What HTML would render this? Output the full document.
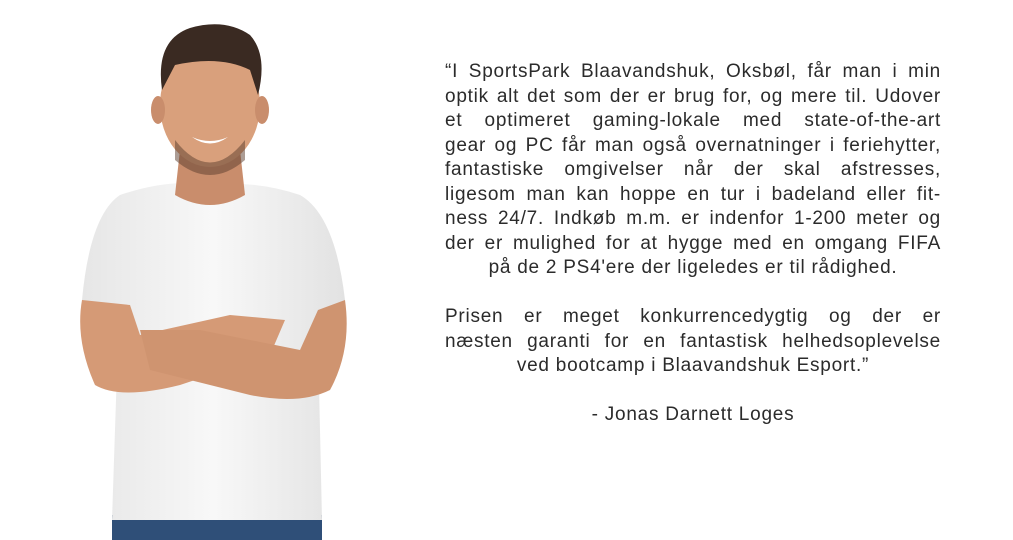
<!DOCTYPE html>
<html><head><meta charset="utf-8"><style>
html,body{margin:0;padding:0;background:#fff;width:1013px;height:540px;overflow:hidden;position:relative}
.t{position:absolute;left:445px;width:496px;font-family:"Liberation Sans",sans-serif;font-size:19px;letter-spacing:0.75px;color:#2b2b2b;line-height:24.5px}
.t div{text-align:justify;text-align-last:justify;white-space:nowrap}
.t div.c{text-align:center;text-align-last:center}
</style></head><body>
<svg width="420" height="540" style="position:absolute;left:0;top:0">
<defs>
<linearGradient id="sh" x1="0" x2="1"><stop offset="0" stop-color="#e6e6e6"/><stop offset=".5" stop-color="#f8f8f8"/><stop offset="1" stop-color="#e2e2e2"/></linearGradient>
</defs>
<rect x="112" y="515" width="210" height="30" fill="#2f4f78"/>
<path d="M120 195 Q170 178 210 185 Q255 180 300 195 Q335 215 345 300 L330 310 L318 340 L322 520 L112 520 L118 340 L82 300 Q90 215 120 195Z" fill="url(#sh)"/>
<path d="M180 150 L240 150 L245 195 Q210 215 175 195Z" fill="#c98d6c"/>
<ellipse cx="210" cy="105" rx="50" ry="62" fill="#d9a07c"/>
<ellipse cx="158" cy="110" rx="7" ry="14" fill="#c98d6c"/>
<ellipse cx="262" cy="110" rx="7" ry="14" fill="#c98d6c"/>
<path d="M162 90 Q155 40 190 28 Q225 18 250 35 Q268 55 258 95 L250 70 Q220 55 175 65 Z" fill="#3a2a22"/>
<path d="M175 140 Q210 185 245 140 L245 160 Q210 190 175 160Z" fill="#5a3b2c" opacity=".5"/>
<path d="M192 137 Q210 150 228 137 Q210 145 192 137Z" fill="#fff"/>
<path d="M82 300 Q75 340 95 385 Q120 400 180 385 L270 355 L285 320 L230 315 L140 335 L130 305Z" fill="#d59a76"/>
<path d="M345 300 Q352 350 330 390 Q300 405 250 395 L150 370 L140 330 L200 330 L300 350 L318 310Z" fill="#cf9470"/>
</svg>
<div class="t" style="top:60px">
<div>“I SportsPark Blaavandshuk, Oksbøl, får man i min</div>
<div>optik alt det som der er brug for, og mere til. Udover</div>
<div>et optimeret gaming-lokale med state-of-the-art</div>
<div>gear og PC får man også overnatninger i feriehytter,</div>
<div>fantastiske omgivelser når der skal afstresses,</div>
<div>ligesom man kan hoppe en tur i badeland eller fit-</div>
<div>ness 24/7. Indkøb m.m. er indenfor 1-200 meter og</div>
<div>der er mulighed for at hygge med en omgang FIFA</div>
<div class="c">på de 2 PS4'ere der ligeledes er til rådighed.</div>
<div>&nbsp;</div>
<div>Prisen er meget konkurrencedygtig og der er</div>
<div>næsten garanti for en fantastisk helhedsoplevelse</div>
<div class="c">ved bootcamp i Blaavandshuk Esport.”</div>
<div>&nbsp;</div>
<div class="c">- Jonas Darnett Loges</div>
</div>
</body></html>
